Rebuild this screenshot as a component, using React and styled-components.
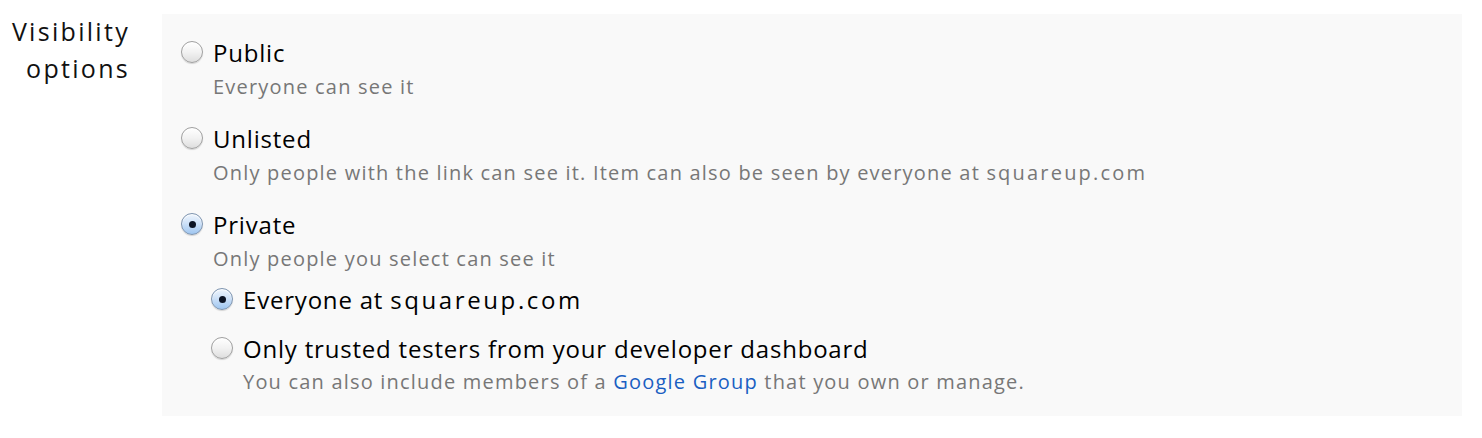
import React from "react";
import styled, { createGlobalStyle } from "styled-components";

const GlobalStyle = createGlobalStyle`
  body {
    margin: 0;
    background: #ffffff;
    font-family: "Open Sans", "Noto Sans", sans-serif;
  }
`;

const Row = styled.div`
  display: flex;
  align-items: flex-start;
  padding-top: 14px;
`;

const Label = styled.div`
  width: 130px;
  flex-shrink: 0;
  margin-top: -1px;
  font-size: 25px;
  line-height: 37px;
  letter-spacing: 2.3px;
  color: #111;
  text-align: right;
`;

const Panel = styled.div`
  margin-left: 32px;
  width: 1300px;
  box-sizing: border-box;
  background: #f9f9f9;
  padding: 21px 0 17px 19px;
  display: flex;
  flex-direction: column;
  gap: 17px;
`;

const Group = styled.div`
  display: flex;
  flex-direction: column;
`;

const SubList = styled.div`
  display: flex;
  flex-direction: column;
  gap: 15px;
  margin-top: 6px;
  padding-left: 30px;
`;

const Option = styled.label`
  display: flex;
  align-items: center;
  gap: 10px;
  height: 34px;
  font-size: 24px;
  color: #000;
  letter-spacing: 0.8px;
`;

const Radio = styled.span`
  position: relative;
  width: 22px;
  height: 22px;
  flex-shrink: 0;
  border-radius: 50%;
  box-sizing: border-box;
  border: 1px solid ${(p) => (p.$checked ? "#7f95b0" : "#a0a0a0")};
  background: ${(p) =>
    p.$checked
      ? "linear-gradient(#eef5fd 0%, #cfe2f8 45%, #9fc6f0 100%)"
      : "linear-gradient(#ffffff 0%, #f2f2f2 50%, #dedede 100%)"};
  box-shadow: inset 0 1px 1px rgba(255, 255, 255, 0.9),
    0 1px 1px rgba(0, 0, 0, 0.15);

  &::after {
    content: "";
    display: ${(p) => (p.$checked ? "block" : "none")};
    position: absolute;
    left: 50%;
    top: 50%;
    width: 7px;
    height: 7px;
    margin: -3.5px 0 0 -3.5px;
    border-radius: 50%;
    background: #0c1424;
  }
`;

const Desc = styled.div`
  padding-left: 32px;
  margin-top: ${(p) => (p.$tight ? "0" : "1px")};
  font-size: 20px;
  line-height: 34px;
  color: #777;
  letter-spacing: 1.2px;
`;

const Domain = styled.span`
  letter-spacing: ${(p) => (p.$big ? "2.6px" : "2.2px")};
`;

const Link = styled.a`
  color: #1a5fc2;
  text-decoration: none;
`;

export default function App() {
  return (
    <>
      <GlobalStyle />
      <Row>
        <Label>
          Visibility
          <br />
          options
        </Label>
        <Panel>
          <Group>
            <Option>
              <Radio />
              Public
            </Option>
            <Desc>Everyone can see it</Desc>
          </Group>
          <Group>
            <Option>
              <Radio />
              Unlisted
            </Option>
            <Desc>
              Only people with the link can see it. Item can also be seen by
              everyone at <Domain>squareup.com</Domain>
            </Desc>
          </Group>
          <Group>
            <Option>
              <Radio $checked />
              Private
            </Option>
            <Desc>Only people you select can see it</Desc>
            <SubList>
              <Option>
                <Radio $checked />
                <span>
                  Everyone at <Domain $big>squareup.com</Domain>
                </span>
              </Option>
              <Group>
                <Option>
                  <Radio />
                  Only trusted testers from your developer dashboard
                </Option>
                <Desc $tight>
                  You can also include members of a{" "}
                  <Link href="#">Google Group</Link> that you own or manage.
                </Desc>
              </Group>
            </SubList>
          </Group>
        </Panel>
      </Row>
    </>
  );
}
